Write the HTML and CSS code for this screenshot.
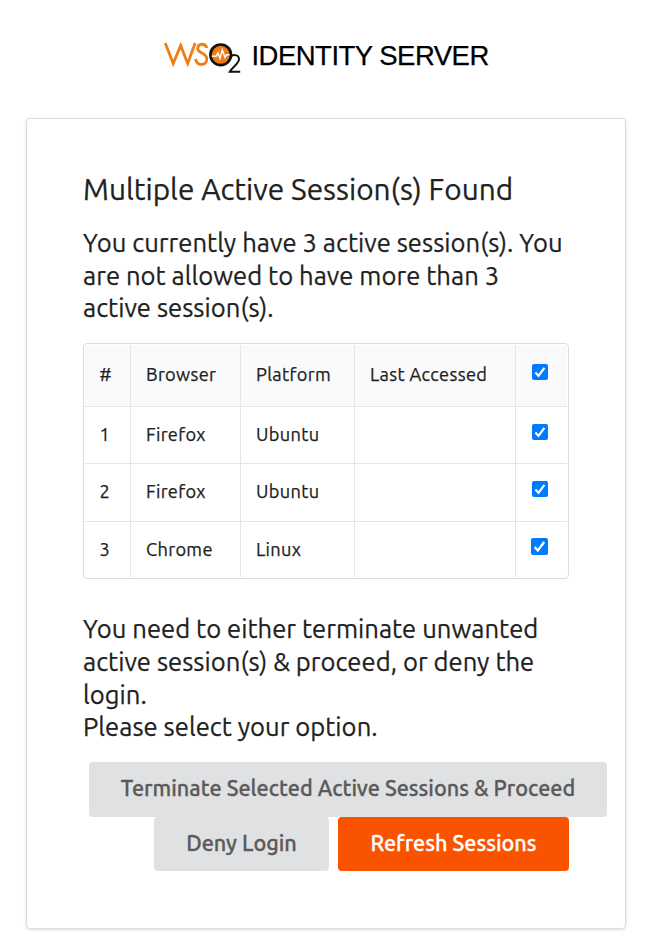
FILE: index.html
```html
<!DOCTYPE html>
<html lang="en">
<head>
<meta charset="utf-8">
<title>Multiple Active Session(s) Found</title>
<link rel="stylesheet" href="styles.css">
</head>
<body>
<header class="brand">
  <svg class="logo" width="78" height="36" viewBox="0 0 78 36" role="img" aria-label="WSO2">
    <g fill="none" stroke="#f07d13" stroke-width="2.8">
      <path d="M1.2 2 L9.2 22.5 L16.7 4.5 L23.7 22.5 L31.2 2" stroke-linejoin="miter"/>
      <path d="M42.8 7 C41.5 1.8 34 2 33.7 7.5 C33.4 12.5 42.8 11.5 42.8 17.8 C42.8 25 33 25.5 31.5 18"/>
    </g>
    <circle cx="56.7" cy="13.8" r="10.3" fill="#f07d13" stroke="#111" stroke-width="2.7"/>
    <path d="M47.8 15.2 H52.2 L54 12 L56 17.5 L58.3 8.8 L61 16.5 L62.5 13.8 H65.5" fill="none" stroke="#fff" stroke-width="1.4"/>
    <path d="M66.4 17.5 C66.7 12.9 74.8 12.8 75 18 C75.1 22.5 69 25.5 65.8 30.7 H76.2" fill="none" stroke="#111" stroke-width="1.9"/>
  </svg>
  <span class="product">IDENTITY SERVER</span>
</header>
<main class="card">
  <h2 class="title">Multiple Active Session(s) Found</h2>
  <p class="text">You currently have 3 active session(s). You<br>are not allowed to have more than 3<br>active session(s).</p>
  <table class="sessions">
    <colgroup><col class="c1"><col class="c2"><col class="c3"><col class="c4"><col class="c5"></colgroup>
    <thead>
      <tr><th>#</th><th>Browser</th><th>Platform</th><th>Last Accessed</th><th><span class="check"><svg viewBox="0 0 16 16"><path d="M3.4 8.6 L6.5 11.8 L12.4 3.8"/></svg></span></th></tr>
    </thead>
    <tbody>
      <tr><td>1</td><td>Firefox</td><td>Ubuntu</td><td></td><td><span class="check"><svg viewBox="0 0 16 16"><path d="M3.4 8.6 L6.5 11.8 L12.4 3.8"/></svg></span></td></tr>
      <tr class="mid"><td>2</td><td>Firefox</td><td>Ubuntu</td><td></td><td><span class="check"><svg viewBox="0 0 16 16"><path d="M3.4 8.6 L6.5 11.8 L12.4 3.8"/></svg></span></td></tr>
      <tr class="last"><td>3</td><td>Chrome</td><td>Linux</td><td></td><td><span class="check"><svg viewBox="0 0 16 16"><path d="M3.4 8.6 L6.5 11.8 L12.4 3.8"/></svg></span></td></tr>
    </tbody>
  </table>
  <p class="text">You need to either terminate unwanted<br>active session(s) &amp; proceed, or deny the<br>login.<br>Please select your option.</p>
  <div class="actions">
    <button class="btn terminate">Terminate Selected Active Sessions &amp; Proceed</button>
    <div class="row">
      <button class="btn deny">Deny Login</button>
      <button class="btn primary">Refresh Sessions</button>
    </div>
  </div>
</main>
</body>
</html>
```
FILE: styles.css
```css
* { box-sizing: border-box; }
html { overflow: hidden; }
body {
  margin: 0;
  height: 946px;
  background: #fff;
  color: #212121;
  font-family: Ubuntu, "Noto Sans", sans-serif;
  -webkit-text-stroke: .25px currentColor;
}
.brand {
  display: flex;
  height: 118px;
  padding: 41px 0 0 164px;
}
.logo { flex: none; }
.product {
  margin-left: 9.5px;
  font: 27.5px/30px "Liberation Sans", sans-serif;
  letter-spacing: -0.52px;
  color: #000;
  white-space: nowrap;
}
.card {
  width: 600px;
  height: 811px;
  margin-left: 26px;
  padding: 51px 56px 0;
  border: 1px solid #dcddde;
  border-radius: 4px;
  box-shadow: 0 1px 3px rgba(34, 36, 38, .15);
}
.title {
  margin: 0 0 19px;
  font-size: 29.8px;
  font-weight: 400;
  line-height: 38px;
  white-space: nowrap;
}
.text {
  margin: 0;
  font-size: 25.6px;
  line-height: 32.7px;
  letter-spacing: .03px;
  white-space: nowrap;
}
.sessions {
  width: 486px;
  height: 236px;
  margin: 18px 0 34px;
  table-layout: fixed;
  border: 1px solid #dcddde;
  border-radius: 4px;
  border-collapse: separate;
  border-spacing: 0;
  font-size: 18.2px;
  line-height: 24px;
  letter-spacing: .33px;
  padding: 1px;
}
.c1 { width: 45px; }
.c2 { width: 110px; }
.c3 { width: 114px; }
.c4 { width: 161px; }
.c5 { width: 52px; }
th, td {
  height: 57px;
  padding: 0 0 2px 15px;
  border-left: 1px solid #e4e6e6;
  border-top: 1px solid #e4e6e6;
  font-weight: 400;
  text-align: left;
  vertical-align: middle;
  white-space: nowrap;
}
th { height: 61px; padding-bottom: 3px; border-top: 0; background: #f9fafb; }
.mid td { height: 58px; padding-bottom: 3px; }
.last td { height: 56px; padding-bottom: 1px; }
th:first-child, td:first-child { border-left: 0; padding-left: 14.5px; }
.check {
  display: block;
  width: 16px;
  height: 16px;
  margin: -5px 0 0 .5px;
  border-radius: 2px;
  background: #007aff;
}
.check svg { display: block; width: 16px; height: 16px; }
.check path { fill: none; stroke: #fff; stroke-width: 2.2; }
.last .check, .last .check svg { width: 17px; height: 17px; }
.last .check { margin-left: 0; }
.actions {
  display: flex;
  flex-direction: column;
  align-items: flex-end;
  margin-top: 18px;
}
.btn {
  height: 54px;
  padding: 0 0 2px;
  border: 0;
  border-radius: 4px;
  background: #e0e1e2;
  color: #5a5a5a;
  font: 500 21.65px/24px Ubuntu, "Noto Sans", sans-serif;
  -webkit-text-stroke: .3px currentColor;
  white-space: nowrap;
}
.terminate { width: 518px; height: 55px; margin-right: -38px; }
.row { display: flex; gap: 9px; }
.deny { width: 175px; }
.primary { width: 231px; background: #fa5300; color: #fff; }
```
